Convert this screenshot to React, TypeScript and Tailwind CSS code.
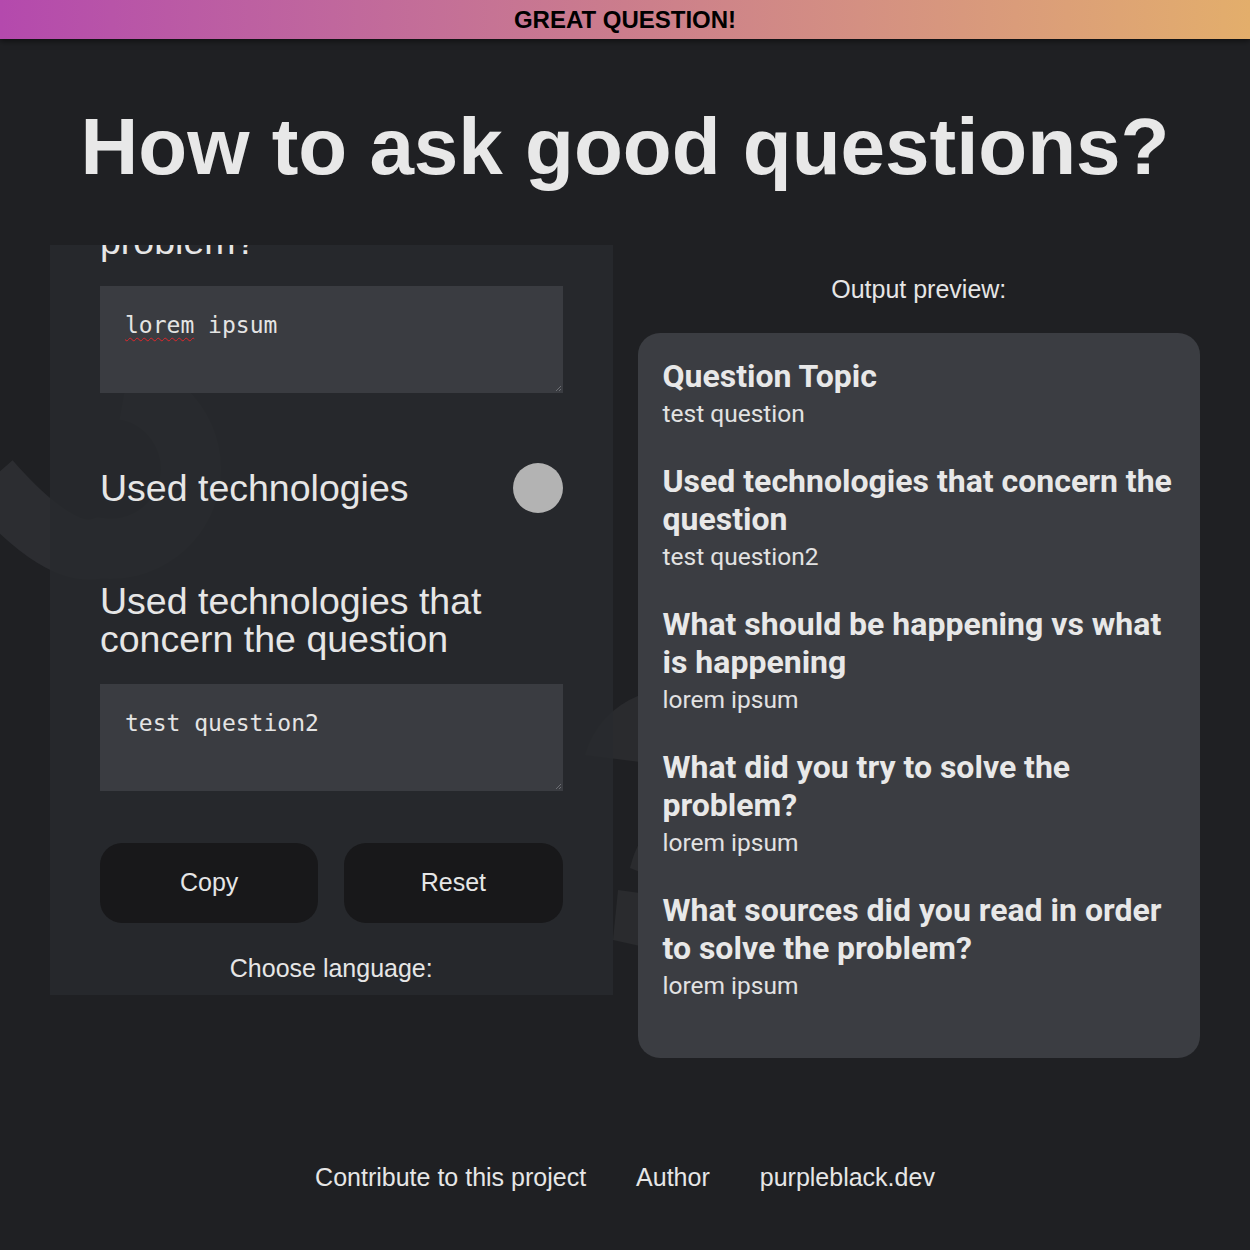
import React from "react";

const sections = [
  { title: "Question Topic", body: "test question" },
  { title: "Used technologies that concern the question", body: "test question2" },
  { title: "What should be happening vs what is happening", body: "lorem ipsum" },
  { title: "What did you try to solve the problem?", body: "lorem ipsum" },
  { title: "What sources did you read in order to solve the problem?", body: "lorem ipsum" },
];

function ResizeGrip() {
  return (
    <svg className="absolute right-[1px] bottom-[1px]" width="7" height="7" viewBox="0 0 7 7">
      <path d="M6 1 L1 6 M6 4 L4 6" stroke="#6b6d72" strokeWidth="1" />
    </svg>
  );
}

function FakeTextarea({ children }: { children: React.ReactNode }) {
  return (
    <div className="relative h-[107px] bg-[#3a3c41] px-[25px] pt-[26px] font-['DejaVu_Sans_Mono',monospace] text-[23px] leading-[27px] text-[#e4e4e4]">
      {children}
      <ResizeGrip />
    </div>
  );
}

function Backdrop() {
  return (
    <svg
      className="pointer-events-none absolute top-0 left-0"
      width="1250"
      height="1250"
      viewBox="0 0 1250 1250"
    >
      <path
        d="M125 390 A80 80 0 0 1 100 548 Q60 560 -10 480"
        fill="none"
        stroke="#2c2d31"
        strokeWidth="60"
      />
      <path d="M585 755 Q598 712 640 695 L640 762 Z" fill="#2a2b2e" />
      <path d="M630 868 Q634 852 640 842 L640 872 Z" fill="#2a2b2e" />
      <path d="M618 890 L640 893 L640 946 L613 940 Z" fill="#2a2b2e" />
    </svg>
  );
}

export default function App() {
  return (
    <div className="relative min-h-screen overflow-hidden bg-[#1f2023] font-['Liberation_Sans',Arial,sans-serif] text-[#e6e6e6]">
      <Backdrop />

      <header className="relative flex h-[39px] items-center justify-center bg-linear-to-r from-[#b449ad] via-[#cb7d8c] to-[#e3ae6b] shadow-[0_2px_6px_rgba(0,0,0,0.55)]">
        <span className="text-[24px] font-bold text-black">GREAT QUESTION!</span>
      </header>

      <h1 className="relative mt-[62px] text-center text-[80px] leading-[92px] font-bold text-[#e8e8e8]">
        How to ask good questions?
      </h1>

      <main className="relative mt-[52px] grid grid-cols-2 gap-[25px] px-[50px]">
        <section className="h-[750px] overflow-hidden bg-[#282a2e]/85 px-[50px]">
          <p className="mt-[-61px] text-[37.5px] leading-[38px] whitespace-nowrap">
            What did you try to solve the
            <br />
            problem?
          </p>
          <div className="mt-[26px]">
            <FakeTextarea>
              <span className="underline decoration-[#e0262b] decoration-wavy decoration-1 underline-offset-[4px]">
                lorem
              </span>{" "}
              ipsum
            </FakeTextarea>
          </div>

          <div className="mt-[70px] flex h-[50px] items-center justify-between">
            <span className="text-[37.5px] leading-[38px]">Used technologies</span>
            <span className="h-[50px] w-[50px] rounded-full bg-[#b3b3b3]" />
          </div>

          <p className="mt-[69px] text-[37.5px] leading-[38px]">
            Used technologies that concern the question
          </p>
          <div className="mt-[26px]">
            <FakeTextarea>test question2</FakeTextarea>
          </div>

          <div className="mt-[52px] grid grid-cols-2 gap-[26px]">
            <button type="button" className="h-[80px] rounded-[22px] bg-[#18181a] text-[25px] text-[#e6e6e6]">
              Copy
            </button>
            <button type="button" className="h-[80px] rounded-[22px] bg-[#18181a] text-[25px] text-[#e6e6e6]">
              Reset
            </button>
          </div>

          <p className="mt-[31px] text-center text-[25px] leading-[29px]">Choose language:</p>
        </section>

        <section>
          <p className="mt-[30px] text-center text-[25px] leading-[29px]">Output preview:</p>
          <div className="mt-[29px] rounded-[22px] bg-[#3b3d42] px-[25px] pt-[24px] pb-[24px] font-['Roboto',sans-serif]">
            {sections.map((s) => (
              <div key={s.title} className="mb-[34px]">
                <h3 className="text-[32px] leading-[38px] font-bold text-[#e8e8e8]">{s.title}</h3>
                <p className="mt-[5px] text-[24.5px] leading-[28px] text-[#e2e2e2]">{s.body}</p>
              </div>
            ))}
          </div>
        </section>
      </main>

      <footer className="relative mt-[105px] flex justify-center gap-[50px] pb-[60px] text-[25px] leading-[29px]">
        <span>Contribute to this project</span>
        <span>Author</span>
        <span>purpleblack.dev</span>
      </footer>
    </div>
  );
}
